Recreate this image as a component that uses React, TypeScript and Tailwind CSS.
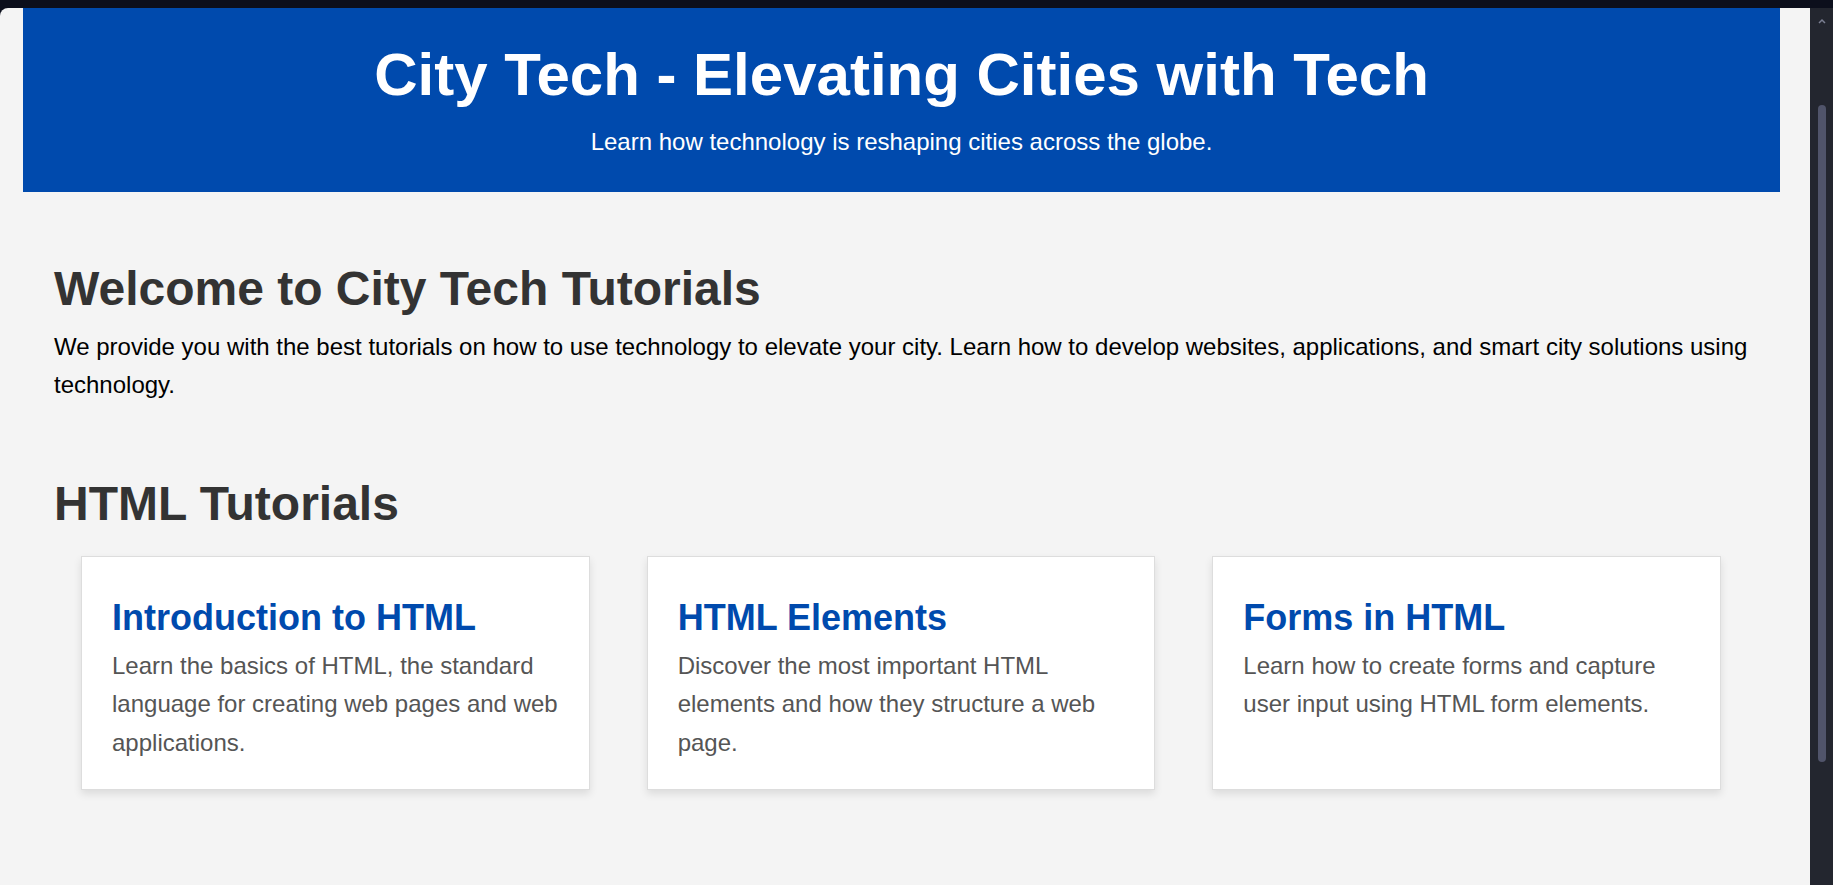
// App.tsx
const cards = [
  {
    title: 'Introduction to HTML',
    text: 'Learn the basics of HTML, the standard language for creating web pages and web applications.',
  },
  {
    title: 'HTML Elements',
    text: 'Discover the most important HTML elements and how they structure a web page.',
  },
  {
    title: 'Forms in HTML',
    text: 'Learn how to create forms and capture user input using HTML form elements.',
  },
];

function Scrollbar() {
  return (
    <div className="flex w-[23px] flex-col items-center bg-[#23262f]">
      <svg className="mt-[10px] h-[6px] w-[8px]" viewBox="0 0 8 6" fill="none">
        <path d="M1 5L4 2L7 5" stroke="#7b7f92" strokeWidth="1.5" />
      </svg>
      <div className="mt-[81px] h-[657px] w-[8px] rounded-full bg-[#50546a]" />
    </div>
  );
}

export default function App() {
  return (
    <div className="flex h-[885px] flex-col overflow-hidden bg-[#0c0f1c] font-['Liberation_Sans',Arial,sans-serif]">
      <div className="h-[8px] shrink-0" />
      <div className="flex flex-1">
        <div className="flex-1 rounded-tl-[8px] bg-[#f4f4f4]">
          {/* Header */}
          <header className="ml-[23px] mr-[30px] bg-[#004aad] pt-[32px] pb-[31px] text-center text-white">
            <h1 className="text-[60px] font-bold leading-[69px]">City Tech - Elevating Cities with Tech</h1>
            <p className="mt-[14px] text-[24px] leading-[38px]">Learn how technology is reshaping cities across the globe.</p>
          </header>

          {/* Content */}
          <main className="pl-[54px] pr-[58px] pt-[69px]">
            <h2 className="text-[48px] font-bold leading-[55px] text-[#333]">Welcome to City Tech Tutorials</h2>
            <p className="mt-[12px] text-[24px] leading-[38.4px] text-black">
              We provide you with the best tutorials on how to use technology to elevate your city. Learn how to develop websites, applications, and smart city solutions using technology.
            </p>

            <h2 className="mt-[71px] text-[48px] font-bold leading-[55px] text-[#333]">HTML Tutorials</h2>
            <div className="mt-[25px] grid grid-cols-3 gap-[57px] pl-[27px] pr-[31px]">
              {cards.map((card) => (
                <div
                  key={card.title}
                  className="border border-[#ddd] bg-white pt-[40px] pb-[27px] pl-[30px] pr-[28px] shadow-[0_4px_8px_rgba(0,0,0,0.1)]"
                >
                  <h3 className="text-[36px] font-bold leading-[41px] text-[#004aad]">{card.title}</h3>
                  <p className="mt-[9px] text-[24px] leading-[38.4px] text-[#555]">{card.text}</p>
                </div>
              ))}
            </div>
          </main>
        </div>
        <Scrollbar />
      </div>
    </div>
  );
}
